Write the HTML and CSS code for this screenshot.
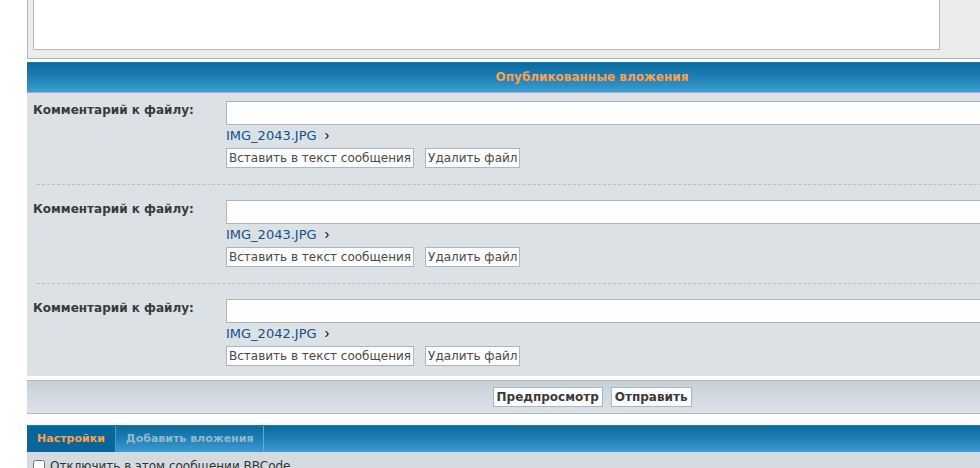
FILE: index.html
```html
<!DOCTYPE html>
<html lang="ru">
<head>
  <meta charset="UTF-8">
  <title>Ответить</title>
  <link rel="stylesheet" href="styles.css">
</head>
<body>

<div class="wrap">
  <div class="editor-panel">
    <textarea class="message" name="message"></textarea>
  </div>

  <div class="cat-head">Опубликованные вложения</div>

  <div class="attach-list">
    <div class="attach-row">
      <label class="attach-label">Комментарий к файлу:</label>
      <div class="attach-body">
        <input type="text" class="comment-input">
        <div class="file-line">
          <a href="#" class="file-link">IMG_2043.JPG</a>
          <svg class="arrow" width="4" height="6" viewBox="0 0 4 6"><path d="M0 0h1.4l2.6 3-2.6 3H0l2.4-3z" fill="#222"/></svg>
        </div>
        <div class="file-actions">
          <button class="btn-small">Вставить в текст сообщения</button>
          <button class="btn-small">Удалить файл</button>
        </div>
      </div>
    </div>
    <div class="sep"></div>

    <div class="attach-row">
      <label class="attach-label">Комментарий к файлу:</label>
      <div class="attach-body">
        <input type="text" class="comment-input">
        <div class="file-line">
          <a href="#" class="file-link">IMG_2043.JPG</a>
          <svg class="arrow" width="4" height="6" viewBox="0 0 4 6"><path d="M0 0h1.4l2.6 3-2.6 3H0l2.4-3z" fill="#222"/></svg>
        </div>
        <div class="file-actions">
          <button class="btn-small">Вставить в текст сообщения</button>
          <button class="btn-small">Удалить файл</button>
        </div>
      </div>
    </div>
    <div class="sep"></div>

    <div class="attach-row">
      <label class="attach-label">Комментарий к файлу:</label>
      <div class="attach-body">
        <input type="text" class="comment-input">
        <div class="file-line">
          <a href="#" class="file-link">IMG_2042.JPG</a>
          <svg class="arrow" width="4" height="6" viewBox="0 0 4 6"><path d="M0 0h1.4l2.6 3-2.6 3H0l2.4-3z" fill="#222"/></svg>
        </div>
        <div class="file-actions">
          <button class="btn-small">Вставить в текст сообщения</button>
          <button class="btn-small">Удалить файл</button>
        </div>
      </div>
    </div>
  </div>

  <div class="submit-bar">
    <button class="btn-main">Предпросмотр</button>
    <button class="btn-main">Отправить</button>
  </div>

  <div class="tabs">
    <span class="tab active">Настройки</span>
    <span class="tab">Добавить вложения</span>
  </div>
  <div class="options">
    <label class="opt"><input type="checkbox" class="check"> Отключить в этом сообщении BBCode</label>
  </div>
</div>

</body>
</html>
```

FILE: styles.css
```css
body {
  margin: 0;
  padding: 0;
  background: #fff;
  font-family: "DejaVu Sans", Verdana, sans-serif;
  font-size: 12px;
  color: #333;
  overflow: hidden;
}

.wrap {
  width: 1130px;
  margin-left: 27px;
}

.editor-panel {
  background: #ececec;
  border: 1px solid #aab7c0;
  border-top: none;
  padding: 0 6px 8px 5px;
}

.message {
  display: block;
  width: 907px;
  height: 50px;
  box-sizing: border-box;
  border: 1px solid #b3bcc4;
  border-top: none;
  background: #fff;
  resize: none;
  margin: 0;
}

.cat-head {
  margin-top: 3px;
  height: 29px;
  line-height: 29px;
  border-top: 1px solid #0984ae;
  border-bottom: 1px solid #b9a3cb;
  background: linear-gradient(#0c6a9d, #1f80b6 50%, #3b9dd0);
  color: #ffa04a;
  font-weight: bold;
  font-size: 12px;
  text-align: center;
}

.attach-list {
  background: #dce1e5;
  padding-bottom: 2px;
}

.attach-row {
  display: flex;
  padding: 8px 0 8px 6px;
}

.attach-label {
  width: 193px;
  flex: none;
  padding-top: 2px;
  font-weight: bold;
  color: #3a3a3a;
}

.attach-body {
  flex: 1;
}

.comment-input {
  display: block;
  width: 100%;
  height: 24px;
  box-sizing: border-box;
  margin: 0;
  border: 1px solid #aab7c0;
  background: #fefefe;
}

.file-line {
  height: 15px;
  margin-top: 3px;
  line-height: 15px;
  display: flex;
  align-items: center;
  gap: 8px;
}

.file-link {
  color: #105289;
  text-decoration: none;
  font-size: 13px;
}

.file-actions {
  margin-top: 5px;
  display: flex;
  gap: 11px;
}

.btn-small {
  height: 20px;
  padding: 0 2px;
  border: 1px solid #aab7c0;
  background: #fcfcfc;
  color: #4a4a4a;
  font-family: inherit;
  font-size: 12px;
}

.sep {
  margin: 8px 0 7px 10px;
  border-top: 1px dashed #b8bec4;
}

.submit-bar {
  margin-top: 4px;
  padding: 6px 0;
  border-top: 1px solid #aab7c0;
  border-bottom: 1px solid #aab7c0;
  background: linear-gradient(#c8d0d8, #dde2e7);
  display: flex;
  justify-content: center;
  gap: 8px;
}

.btn-main {
  height: 20px;
  padding: 0 3px;
  border: 1px solid #aab7c0;
  background: #fcfcfc;
  color: #3a3a3a;
  font-family: inherit;
  font-weight: bold;
  font-size: 12px;
}

.tabs {
  margin-top: 11px;
  height: 26px;
  border-top: 1px solid #0984ae;
  background: linear-gradient(#0c6a9d, #1f80b6 50%, #3b9dd0);
  display: flex;
  font-size: 11px;
}

.tab {
  padding: 0 10px;
  line-height: 26px;
  font-weight: bold;
  color: #96b8cf;
  border-right: 1px solid #63a9d2;
}

.tab.active {
  background: #07679a;
  color: #ffa04a;
  border-right-color: #4f98c4;
}

.options {
  background: #d4dadf;
  padding: 7px 6px;
}

.opt {
  display: flex;
  align-items: center;
  gap: 5px;
}

.check {
  margin: 0;
  width: 12px;
  height: 12px;
}
```
